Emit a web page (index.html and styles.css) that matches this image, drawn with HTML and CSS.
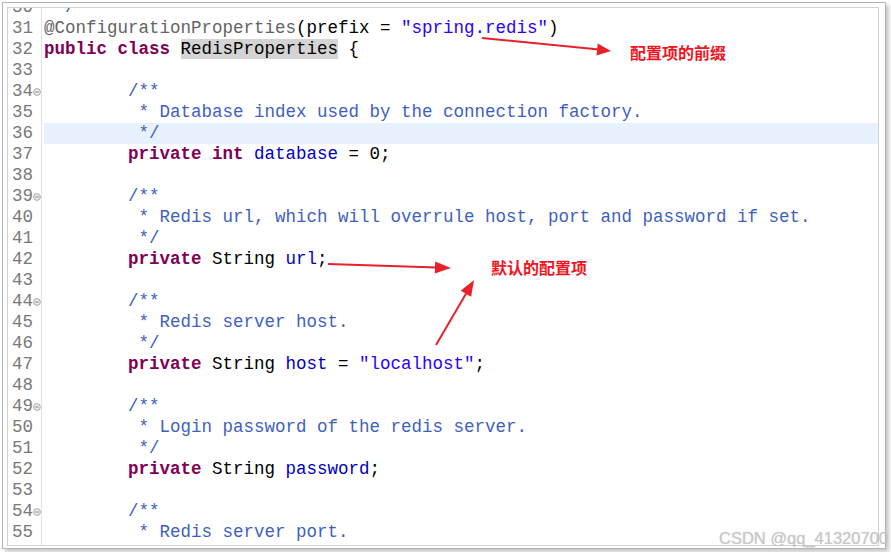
FILE: index.html
```html
<!DOCTYPE html>
<html lang="zh-CN">
<head>
  <meta charset="UTF-8" />
  <title>RedisProperties</title>
  <link rel="stylesheet" href="styles.css">
</head>
<body>
  <div class="window">
    <div class="editor">
      <div class="lines">
        <div class="row"><span class="ln"><span class="num">30</span><span class="fold"></span></span><span class="src"><span class="cm"> */</span></span></div>
        <div class="row"><span class="ln"><span class="num">31</span><span class="fold"></span></span><span class="src"><span class="an">@ConfigurationProperties</span>(prefix = <span class="str">"spring.redis"</span>)</span></div>
        <div class="row"><span class="ln"><span class="num">32</span><span class="fold"></span></span><span class="src"><span class="kw">public</span> <span class="kw">class</span> <span class="mark">RedisProperties</span> {</span></div>
        <div class="row"><span class="ln"><span class="num">33</span><span class="fold"></span></span><span class="src"></span></div>
        <div class="row"><span class="ln"><span class="num">34</span><span class="fold"><svg width="8" height="8" viewBox="0 0 8 8"><circle cx="4" cy="4" r="3.4" /><line x1="2.2" y1="4" x2="5.8" y2="4" /></svg></span></span><span class="src">        <span class="cm">/**</span></span></div>
        <div class="row"><span class="ln"><span class="num">35</span><span class="fold"></span></span><span class="src">         <span class="cm">* Database index used by the connection factory.</span></span></div>
        <div class="row current"><span class="ln"><span class="num">36</span><span class="fold"></span></span><span class="src">         <span class="cm">*/</span></span></div>
        <div class="row"><span class="ln"><span class="num">37</span><span class="fold"></span></span><span class="src">        <span class="kw">private</span> <span class="kw">int</span> <span class="fd">database</span> = 0;</span></div>
        <div class="row"><span class="ln"><span class="num">38</span><span class="fold"></span></span><span class="src"></span></div>
        <div class="row"><span class="ln"><span class="num">39</span><span class="fold"><svg width="8" height="8" viewBox="0 0 8 8"><circle cx="4" cy="4" r="3.4" /><line x1="2.2" y1="4" x2="5.8" y2="4" /></svg></span></span><span class="src">        <span class="cm">/**</span></span></div>
        <div class="row"><span class="ln"><span class="num">40</span><span class="fold"></span></span><span class="src">         <span class="cm">* Redis url, which will overrule host, port and password if set.</span></span></div>
        <div class="row"><span class="ln"><span class="num">41</span><span class="fold"></span></span><span class="src">         <span class="cm">*/</span></span></div>
        <div class="row"><span class="ln"><span class="num">42</span><span class="fold"></span></span><span class="src">        <span class="kw">private</span> String <span class="fd">url</span>;</span></div>
        <div class="row"><span class="ln"><span class="num">43</span><span class="fold"></span></span><span class="src"></span></div>
        <div class="row"><span class="ln"><span class="num">44</span><span class="fold"><svg width="8" height="8" viewBox="0 0 8 8"><circle cx="4" cy="4" r="3.4" /><line x1="2.2" y1="4" x2="5.8" y2="4" /></svg></span></span><span class="src">        <span class="cm">/**</span></span></div>
        <div class="row"><span class="ln"><span class="num">45</span><span class="fold"></span></span><span class="src">         <span class="cm">* Redis server host.</span></span></div>
        <div class="row"><span class="ln"><span class="num">46</span><span class="fold"></span></span><span class="src">         <span class="cm">*/</span></span></div>
        <div class="row"><span class="ln"><span class="num">47</span><span class="fold"></span></span><span class="src">        <span class="kw">private</span> String <span class="fd">host</span> = <span class="str">"localhost"</span>;</span></div>
        <div class="row"><span class="ln"><span class="num">48</span><span class="fold"></span></span><span class="src"></span></div>
        <div class="row"><span class="ln"><span class="num">49</span><span class="fold"><svg width="8" height="8" viewBox="0 0 8 8"><circle cx="4" cy="4" r="3.4" /><line x1="2.2" y1="4" x2="5.8" y2="4" /></svg></span></span><span class="src">        <span class="cm">/**</span></span></div>
        <div class="row"><span class="ln"><span class="num">50</span><span class="fold"></span></span><span class="src">         <span class="cm">* Login password of the redis server.</span></span></div>
        <div class="row"><span class="ln"><span class="num">51</span><span class="fold"></span></span><span class="src">         <span class="cm">*/</span></span></div>
        <div class="row"><span class="ln"><span class="num">52</span><span class="fold"></span></span><span class="src">        <span class="kw">private</span> String <span class="fd">password</span>;</span></div>
        <div class="row"><span class="ln"><span class="num">53</span><span class="fold"></span></span><span class="src"></span></div>
        <div class="row"><span class="ln"><span class="num">54</span><span class="fold"><svg width="8" height="8" viewBox="0 0 8 8"><circle cx="4" cy="4" r="3.4" /><line x1="2.2" y1="4" x2="5.8" y2="4" /></svg></span></span><span class="src">        <span class="cm">/**</span></span></div>
        <div class="row"><span class="ln"><span class="num">55</span><span class="fold"></span></span><span class="src">         <span class="cm">* Redis server port.</span></span></div>
        <div class="row"><span class="ln"><span class="num"></span><span class="fold"></span></span><span class="src"></span></div>
      </div>
    </div>
  </div>

  <!-- red annotations drawn over the screenshot -->
  <svg class="arrows" width="891" height="552" viewBox="0 0 891 552">
    <line x1="482" y1="38" x2="599" y2="49.6" />
    <polygon points="611,51 597.7,43.6 596.5,55.6" />
    <line x1="328" y1="264" x2="437" y2="267.5" />
    <polygon points="451,268 435.2,261.5 434.8,273.5" />
    <line x1="436" y1="345" x2="467" y2="292" />
    <polygon points="474,280 471.1,296.8 460.7,290.8" />
  </svg>
  <div class="note note-prefix">配置项的前缀</div>
  <div class="note note-default">默认的配置项</div>

  <div class="watermark">CSDN @qq_41320700</div>
</body>
</html>
```

FILE: styles.css
```css
* {
  box-sizing: border-box;
}

body {
  margin: 0;
  width: 891px;
  height: 552px;
  background: #ffffff;
  overflow: hidden;
  position: relative;
}

/* Outer screenshot frame */
.window {
  margin: 2px 0 0 2px;
  width: 884px;
  height: 547px;
  border: 1px solid #b4b4b4;
  box-shadow: 3px 3px 4px rgba(0, 0, 0, 0.22);
  padding: 4px 6px 2px 4px;
  background: #fff;
}

.editor {
  height: 100%;
  border: 1px solid #d2d2d2;
  overflow: hidden;
  background: #fff;
}

.lines {
  margin-top: -11px;
  font-family: "Liberation Mono", "Courier New", monospace;
  font-size: 17.5px;
  color: #000;
}

.row {
  display: flex;
  height: 21px;
  line-height: 21px;
}

.ln {
  flex: none;
  width: 34px;
  display: flex;
  justify-content: flex-end;
  align-items: center;
  border-right: 1px solid #e2e2e2;
  color: #787878;
}

.fold {
  width: 8px;
  height: 8px;
  display: flex;
}

.fold svg circle {
  fill: #ececec;
  stroke: #a0a0a0;
  stroke-width: 0.9;
}

.fold svg line {
  stroke: #808080;
  stroke-width: 0.9;
}

.src {
  flex: 1;
  margin-left: 2px;
  white-space: pre;
}

.current .src {
  background: #e8f2fe;
}

/* Syntax colours */
.kw {
  color: #7f0055;
  font-weight: bold;
}

.cm {
  color: #3f5fbf;
}

.str {
  color: #2a00ff;
}

.fd {
  color: #0000c0;
}

.an {
  color: #646464;
}

.mark {
  background: #d4d4d4;
}

/* Annotations */
.arrows {
  position: absolute;
  left: 0;
  top: 0;
  pointer-events: none;
}

.arrows line {
  stroke: #e8202a;
  stroke-width: 2;
}

.arrows polygon {
  fill: #e8202a;
}

.note {
  position: absolute;
  font-family: "Noto Sans CJK SC", sans-serif;
  font-size: 16px;
  line-height: 16px;
  font-weight: bold;
  color: #f0141e;
}

.note-prefix {
  left: 630px;
  top: 44px;
}

.note-default {
  left: 491px;
  top: 259px;
}

.watermark {
  position: absolute;
  right: 3px;
  bottom: 6px;
  font-family: "Liberation Sans", Arial, sans-serif;
  font-size: 16.5px;
  line-height: 16px;
  color: #c8c8c8;
  text-shadow: 0 0 1px rgba(120, 120, 120, 0.35);
}
```
